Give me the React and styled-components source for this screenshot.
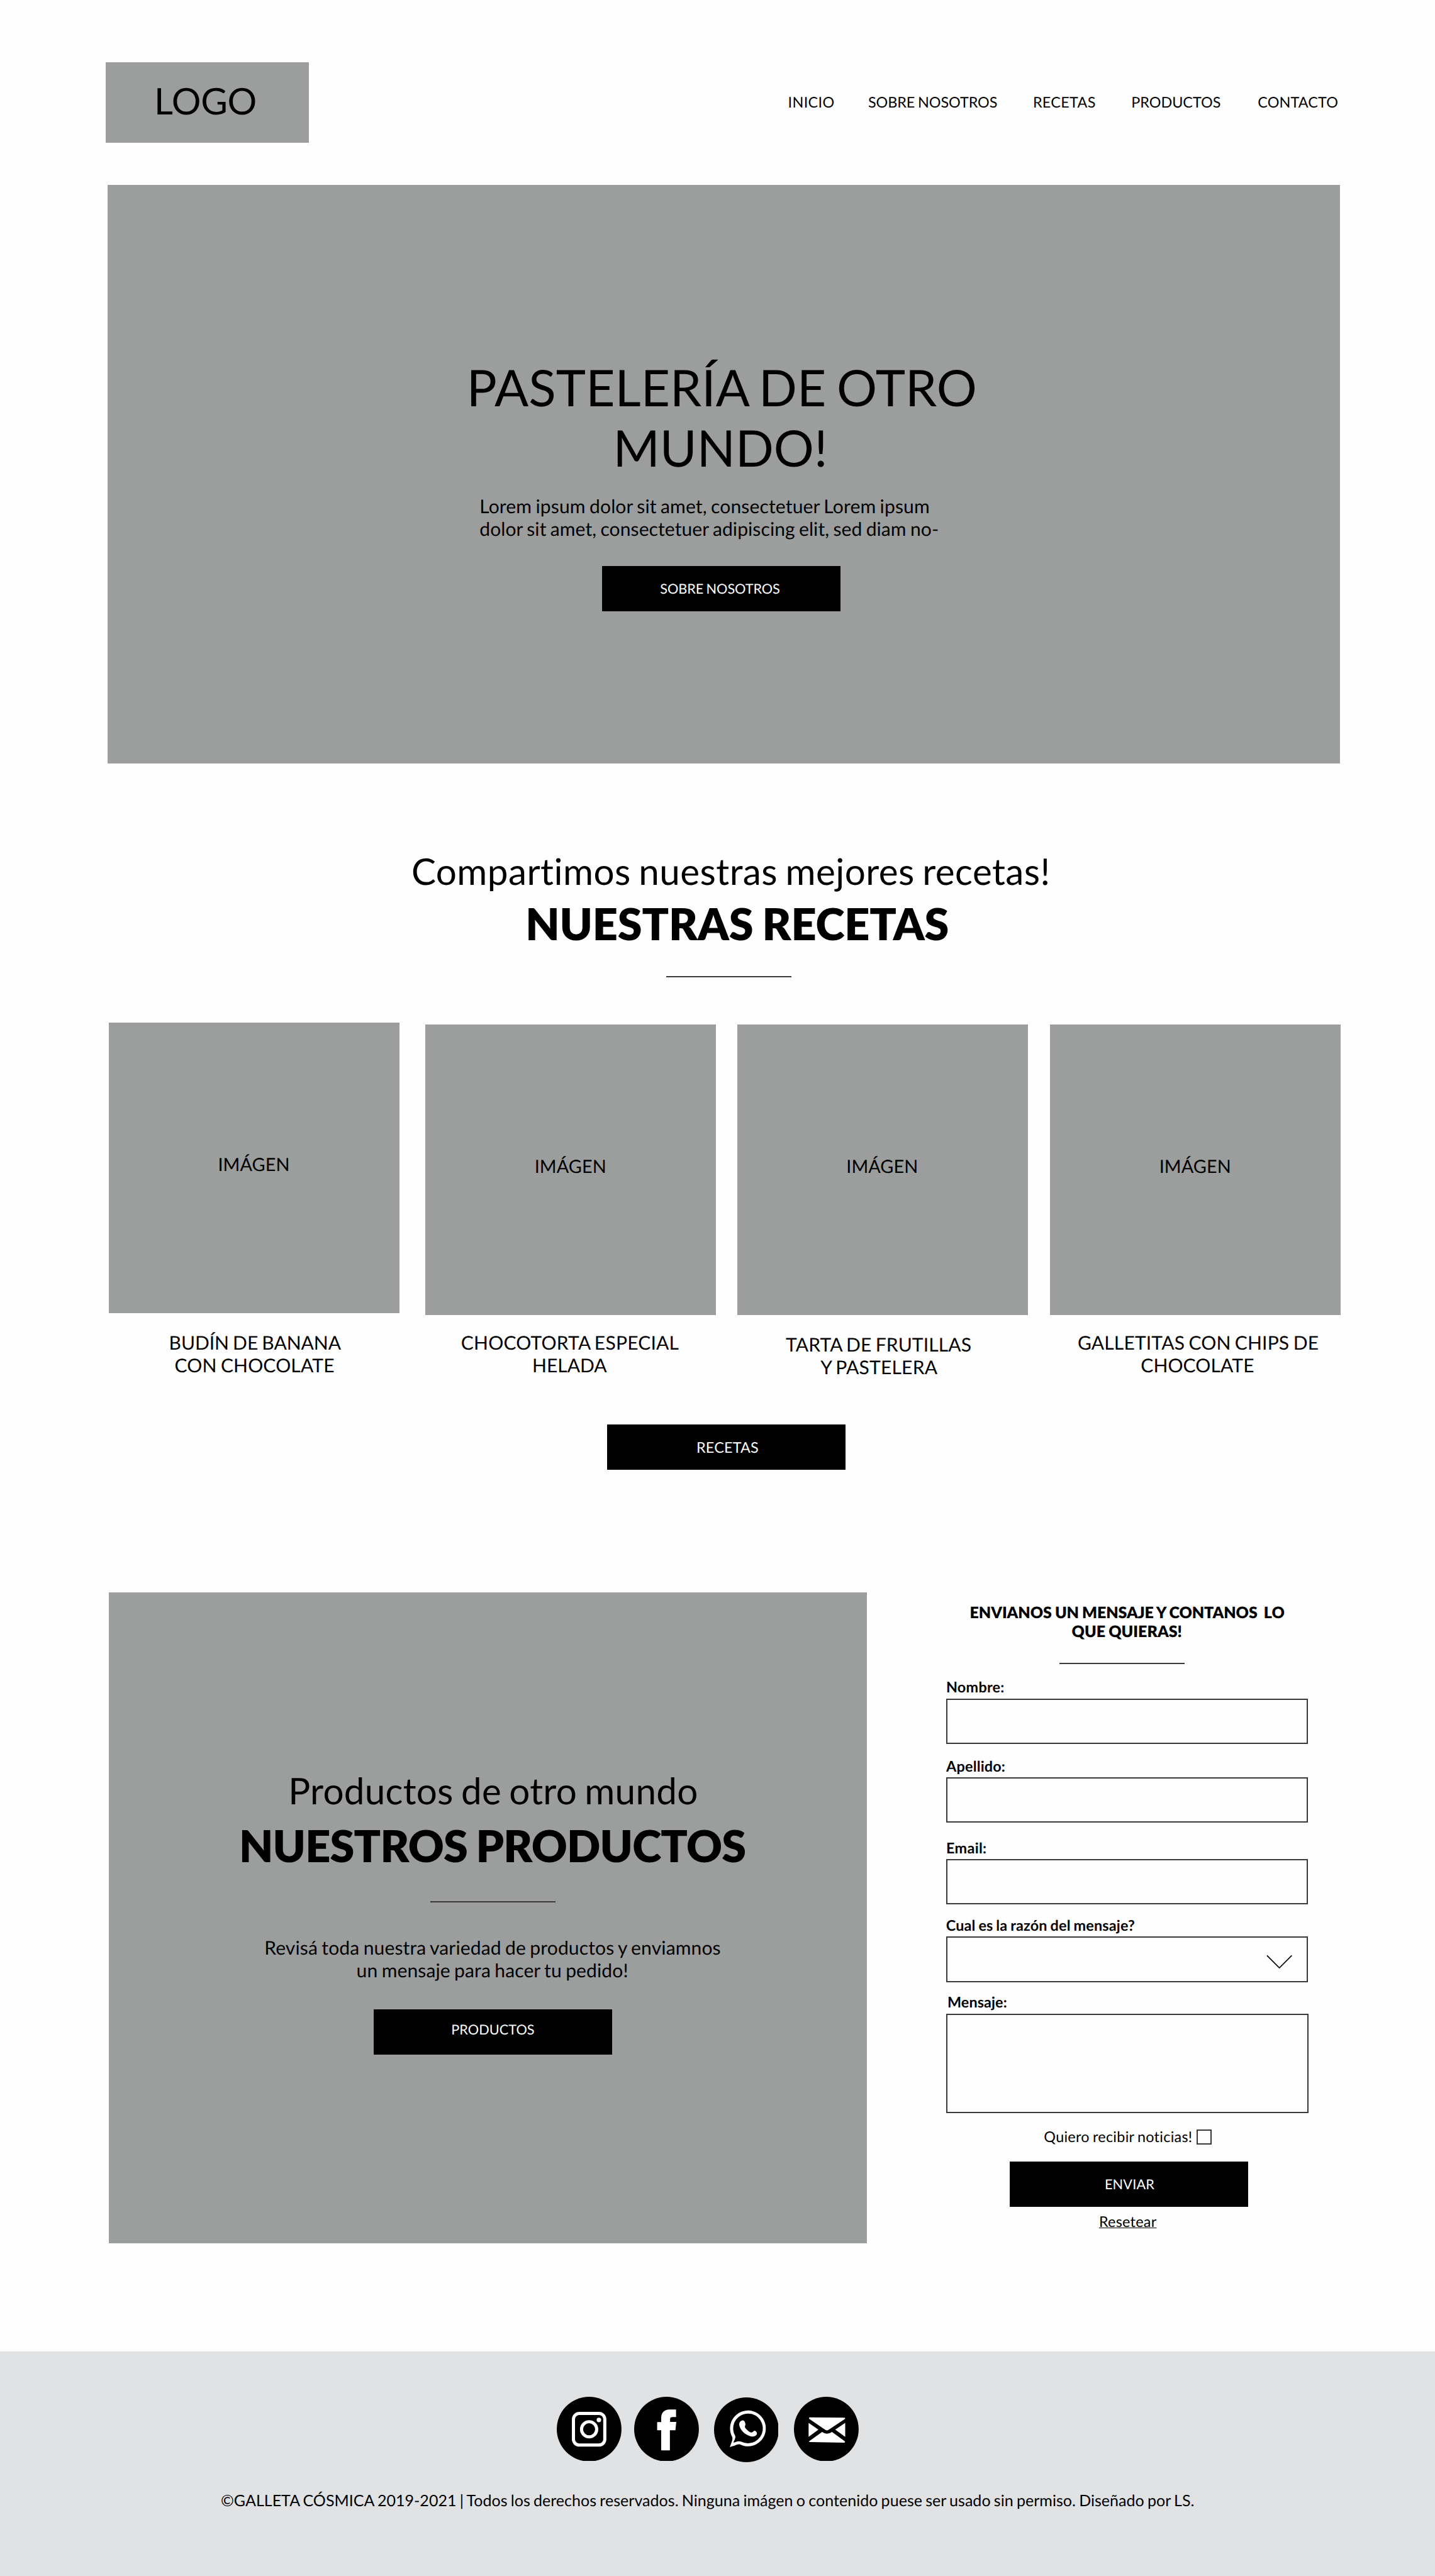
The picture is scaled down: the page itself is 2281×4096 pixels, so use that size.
import React from 'react';
import styled, { createGlobalStyle } from 'styled-components';

// One design unit is 0.01rem; the root font size sets the overall scale.
const u = (n = 0) => `${(n / 100).toFixed(4)}rem`;

const GlobalStyle = createGlobalStyle`
  html { font-size: 80.122px; }
  body { margin: 0; background: #fefefe; }
  *, *::before, *::after { box-sizing: border-box; }
`;

const grey = '#9c9e9d';
const ink = '#3a3839';

const Page = styled.div`
  width: 100vw;
  height: 100vh;
  overflow: hidden;
  display: flex;
  flex-direction: column;
  font-family: Lato, "Liberation Sans", sans-serif;
  text-rendering: geometricPrecision;
  color: #000;
`;

// Word gaps are tightened per weight so every weight shares the same narrow space.
const wordGap = { 400: '-0.05em', 700: '-0.045em', 800: '-0.026em' };

// Larger sizes sit slightly lower in their line box.
const drop = (size) => (size > 30 ? 1 : 0);

const Text = styled.span`
  display: block;
  flex: none;
  white-space: pre;
  line-height: 1.2;
  font-size: ${(p) => u(p.$size)};
  font-weight: ${(p) => p.$weight || 400};
  letter-spacing: ${(p) => u(p.$track)};
  word-spacing: ${(p) => wordGap[p.$weight || 400]};
  padding-top: ${(p) => u(drop(p.$size))};
  margin: ${(p) => u(p.$top)} 0 ${(p) => u(-drop(p.$size))} ${(p) => u(p.$left)};
`;

const Rule = styled.hr`
  flex: none;
  border: 0;
  width: ${u(248)};
  height: 2px;
  background: ${ink};
  margin: ${(p) => u(p.$top)} 0 0 ${(p) => u(p.$left)};
`;

const Button = styled.button`
  flex: none;
  display: flex;
  align-items: flex-start;
  border: 0;
  padding: 0;
  width: ${u(473)};
  height: ${u(90)};
  background: #000;
  color: #fff;
  font-family: inherit;
  text-rendering: inherit;
  margin: ${(p) => u(p.$top)} 0 0 ${(p) => u(p.$left)};
`;

const Header = styled.header`
  flex: none;
  display: flex;
  align-items: flex-start;
  height: ${u(366.8)};
  padding: ${u(123)} 0 0 ${u(210)};
`;

const Logo = styled.div`
  width: ${u(402.5)};
  height: ${u(160.6)};
  display: flex;
  align-items: flex-start;
  background: ${grey};
`;

const Nav = styled.nav`
  display: grid;
  grid-template-columns: ${u(159.1)} ${u(326.9)} ${u(195.1)} ${u(251)} ${u(170)};
  margin: ${u(62.3)} 0 0 ${u(950.8)};
`;

const Hero = styled.section`
  flex: none;
  display: flex;
  flex-direction: column;
  width: ${u(2444)};
  height: ${u(1148)};
  margin-left: ${u(213.9)};
  background: ${grey};
`;

const Recipes = styled.section`
  flex: none;
  display: flex;
  flex-direction: column;
  height: ${u(1645.2)};
`;

const CardRow = styled.div`
  flex: none;
  display: grid;
  grid-template-columns: ${u(628.1)} ${u(618.5)} ${u(620.9)} ${u(577)};
  align-items: start;
  height: ${u(707.5)};
  margin: ${u(89.7)} 0 0 ${u(215.6)};
`;

const Card = styled.article`
  display: flex;
  flex-direction: column;
  width: ${u(577)};
  padding-top: ${(p) => u(p.$drop)};
`;

const CardImage = styled.div`
  display: flex;
  justify-content: center;
  align-items: flex-start;
  height: ${u(577)};
  padding-right: ${u(1)};
  background: ${grey};
`;

const Bottom = styled.section`
  flex: none;
  display: flex;
  align-items: flex-start;
  height: ${u(1506.7)};
  padding-left: ${u(215.5)};
`;

const ProductsPanel = styled.div`
  display: flex;
  flex-direction: column;
  width: ${u(1504)};
  height: ${u(1292.3)};
  background: ${grey};
`;

const Form = styled.form`
  display: flex;
  flex-direction: column;
  margin-left: ${u(157.3)};
`;

const Field = styled.div`
  flex: none;
  display: flex;
  justify-content: flex-end;
  align-items: flex-start;
  width: ${u(718.5)};
  height: ${(p) => u(p.$height || 90)};
  margin: ${(p) => u(p.$top)} 0 0 ${(p) => u(p.$left)};
  border: 2px solid ${ink};
`;

const Chevron = styled.svg`
  width: ${u(54)};
  height: ${u(30)};
  margin: ${u(31.5)} ${u(27.5)} 0 0;
`;

const CheckRow = styled.label`
  display: flex;
  align-items: flex-start;
  width: ${u(333)};
  justify-content: space-between;
  margin: ${u(29.3)} 0 0 ${u(194.2)};
`;

const Checkbox = styled.span`
  width: ${u(30)};
  height: ${u(30)};
  margin-top: ${u(3.9)};
  border: 2px solid ${ink};
`;

const ResetLink = styled(Text)`
  align-self: flex-start;
  text-decoration: underline;
  text-decoration-thickness: 1.4px;
  text-underline-offset: ${u(1.6)};
  text-decoration-skip-ink: none;
`;

const Footer = styled.footer`
  flex: 1;
  display: flex;
  flex-direction: column;
  background: #e1e2e4;
`;

const Social = styled.div`
  flex: none;
  display: grid;
  grid-template-columns: ${u(153.7)} ${u(157.5)} ${u(159)} ${u(129)};
  align-items: start;
  height: ${u(128.5)};
  margin: ${u(89.3)} 0 0 ${u(1104.8)};
`;

const Badge = styled.svg`
  display: block;
  width: ${u(128.4)};
  height: ${u(128.4)};
  margin-top: ${(p) => u(p.$top)};
`;

const recipes = [
  {
    drop: 0,
    lines: [
      { t: 'BUDÍN DE BANANA', left: 119.6, track: -0.06, top: 34.5 },
      { t: 'CON CHOCOLATE', left: 130.8, track: 0.18 },
    ],
  },
  {
    drop: 4,
    lines: [
      { t: 'CHOCOTORTA ESPECIAL', left: 71, track: 0.25, top: 30.5 },
      { t: 'HELADA', left: 212.3 },
    ],
  },
  {
    drop: 4,
    lines: [
      { t: 'TARTA DE FRUTILLAS', left: 96.8, track: 0.15, top: 34.5 },
      { t: 'Y PASTELERA', left: 165.6, track: 0.24 },
    ],
  },
  {
    drop: 4,
    lines: [
      { t: 'GALLETITAS CON CHIPS DE', left: 54.8, track: 0.19, top: 30.5 },
      { t: 'CHOCOLATE', left: 180, track: 0.14 },
    ],
  },
];

const nav = [
  ['INICIO', 0.45],
  ['SOBRE NOSOTROS', -0.08],
  ['RECETAS', 0.4],
  ['PRODUCTOS', 0],
  ['CONTACTO', 0.16],
];

function Label({ children, ...rest }) {
  return <Text $size={29.17} $weight={700} {...rest}>{children}</Text>;
}

function Instagram() {
  return (
    <Badge viewBox="0 0 128 128">
      <circle cx="64" cy="64" r="64" />
      <g fill="none" stroke="#fff" strokeWidth="6.2">
        <rect x="33" y="33.1" width="62" height="62.5" rx="11.5" />
        <circle cx="64" cy="64.3" r="15" />
      </g>
      <circle cx="83.3" cy="45.8" r="4.5" fill="#fff" />
    </Badge>
  );
}

function Facebook() {
  return (
    <Badge viewBox="0 0 128 128">
      <circle cx="64" cy="64" r="64" />
      <path
        fill="#fff"
        d="M82.9 25.3H70C59 25.3 53.5 32 53.5 42V50H45.5V66.3H53.5V106H70.7V66.3H81.7L83.3 49.7H71.1V44.5C71.1 41 73 40 76 40H82.9Z"
      />
    </Badge>
  );
}

function WhatsApp() {
  return (
    <Badge viewBox="0 0 128 128" $top={1.7}>
      <circle cx="64" cy="64" r="64" />
      <path
        fill="#fff"
        fillRule="evenodd"
        d="M31.1 98.3C34 90 37.6 84 36.1 78.6A35.4 35.4 0 1 1 52 93.4C47 91 42 96 31.1 98.3ZM38.3 89.5C42.5 89 47.5 84.8 54 87.7A29.4 29.4 0 1 0 41.8 76.3C43 79 41.2 83.5 38.3 89.5Z"
      />
      <path
        fill="#fff"
        d="M56.4 45.3C51 46.5 49 51 50 55.5C52 66 63 75.5 74 77.3C80 78 85 75 84.9 71.2C84.9 68.5 82.5 66 80.3 65.8C77.8 65.6 77 69.3 73.5 69.3C70.5 69.3 62.5 62.5 61.2 59C60.3 56.5 62.8 55 62 52C61.3 49 59.8 44.8 56.4 45.3Z"
      />
    </Badge>
  );
}

function Mail() {
  return (
    <Badge viewBox="0 0 128 128">
      <circle cx="64" cy="64" r="64" />
      <g fill="#fff">
        <path d="M31 40.7L100 41.5Q102.2 42.4 101 43.8L70 64.5Q65.2 68.5 60.5 64.5L30 43.5Q29 41.5 31 40.7Z" />
        <path d="M29 51.7L48.4 65L29 79.3Z" />
        <path d="M101.4 51.7L81.7 65L101.4 79.3Z" />
        <path d="M55.6 69.7Q65.2 76.5 75.3 69.7L101 88.3Q101.5 90.3 99.5 90.7L31 89.7Q29.4 89 30 88Z" />
      </g>
    </Badge>
  );
}

export default function App() {
  return (
    <Page>
      <GlobalStyle />
      <Header>
        <Logo>
          <Text $size={72.9} $track={-0.4} $top={32.3} $left={95.8}>LOGO</Text>
        </Logo>
        <Nav>
          {nav.map(([label, track]) => (
            <Text key={label} $size={29.17} $track={track}>{label}</Text>
          ))}
        </Nav>
      </Header>

      <Hero>
        <Text $size={100} $track={0.1} $top={341.1} $left={711.9}>PASTELERÍA DE OTRO</Text>
        <Text $size={100} $track={0} $left={1002.3}>MUNDO!</Text>
        <Text $size={37.5} $track={0.18} $top={33.6} $left={737.4}>Lorem ipsum dolor sit amet, consectetuer Lorem ipsum</Text>
        <Text $size={37.5} $track={0.115} $left={737.5}>dolor sit amet, consectetuer adipiscing elit, sed diam no-</Text>
        <Button $top={51.5} $left={981.1}>
          <Text $size={27.08} $track={-0.09} $top={29.2} $left={114.7}>SOBRE NOSOTROS</Text>
        </Button>
      </Hero>

      <Recipes>
        <Text $size={72.9} $track={0.56} $top={169.2} $left={816.1}>Compartimos nuestras mejores recetas!</Text>
        <Text $size={87.5} $weight={800} $track={-0.2} $top={7.8} $left={1042.4}>NUESTRAS RECETAS</Text>
        <Rule $top={53} $left={1322.1} />
        <CardRow>
          {recipes.map((r) => (
            <Card key={r.lines[0].t} $drop={r.drop}>
              <CardImage>
                <Text $size={36} $track={0.1} $top={260}>IMÁGEN</Text>
              </CardImage>
              {r.lines.map((l) => (
                <Text key={l.t} $size={37.5} $track={l.track} $top={l.top} $left={l.left}>{l.t}</Text>
              ))}
            </Card>
          ))}
        </CardRow>
        <Button $top={90} $left={1203.9}>
          <Text $size={29.17} $track={0.26} $top={27.4} $left={177.7}>RECETAS</Text>
        </Button>
      </Recipes>

      <Bottom>
        <ProductsPanel>
          <Text $size={72.9} $track={0.33} $top={348.8} $left={356.5}>Productos de otro mundo</Text>
          <Text $size={87.5} $weight={800} $track={-1.03} $top={11.7} $left={258.7}>NUESTROS PRODUCTOS</Text>
          <Rule $top={60.5} $left={638.4} />
          <Text $size={37.5} $track={0.17} $top={65.8} $left={309}>Revisá toda nuestra variedad de productos y enviamnos</Text>
          <Text $size={37.5} $track={0.15} $left={491.7}>un mensaje para hacer tu pedido!</Text>
          <Button $top={55.5} $left={525.5}>
            <Text $size={27.08} $track={0.07} $top={24.2} $left={154.1}>PRODUCTOS</Text>
          </Button>
        </ProductsPanel>

        <Form>
          <Text $size={31.25} $weight={800} $track={-0.08} $top={20} $left={47.2}>{'ENVIANOS UN MENSAJE Y CONTANOS  LO'}</Text>
          <Text $size={31.25} $weight={800} $left={249.5}>QUE QUIERAS!</Text>
          <Rule $top={45} $left={225} />
          <Label $track={0.35} $top={27.2} $left={0.3}>Nombre:</Label>
          <Field $top={6.4} />
          <Label $track={0.25} $top={25.9} $left={0.5}>Apellido:</Label>
          <Field $top={5} />
          <Label $track={0.45} $top={32.2} $left={0.3}>Email:</Label>
          <Field $top={5.6} />
          <Label $track={0.24} $top={23.2}>Cual es la razón del mensaje?</Label>
          <Field $top={5.6}>
            <Chevron viewBox="0 0 54 30">
              <path d="M2.4 3L27 27.5L51.6 3" fill="none" stroke="#000" strokeWidth="2.1" />
            </Chevron>
          </Field>
          <Label $track={0.15} $top={21.6} $left={2.8}>Mensaje:</Label>
          <Field $top={5.8} $left={0.7} $height={197.6} />
          <CheckRow>
            <Text $size={29.17} $track={0.37}>Quiero recibir noticias!</Text>
            <Checkbox />
          </CheckRow>
          <Button type="button" $top={31.6} $left={126.4}>
            <Text $size={27.08} $track={0.2} $top={28.5} $left={188.4}>ENVIAR</Text>
          </Button>
          <ResetLink $size={29.17} $track={0.35} $top={11} $left={303.5}>Resetear</ResetLink>
        </Form>
      </Bottom>

      <Footer>
        <Social>
          <Instagram />
          <Facebook />
          <WhatsApp />
          <Mail />
        </Social>
        <Text $size={31.25} $track={0.045} $top={58.4} $left={438}>
          ©GALLETA CÓSMICA 2019-2021 | Todos los derechos reservados. Ninguna imágen o contenido puese ser usado sin permiso. Diseñado por LS.
        </Text>
      </Footer>
    </Page>
  );
}
